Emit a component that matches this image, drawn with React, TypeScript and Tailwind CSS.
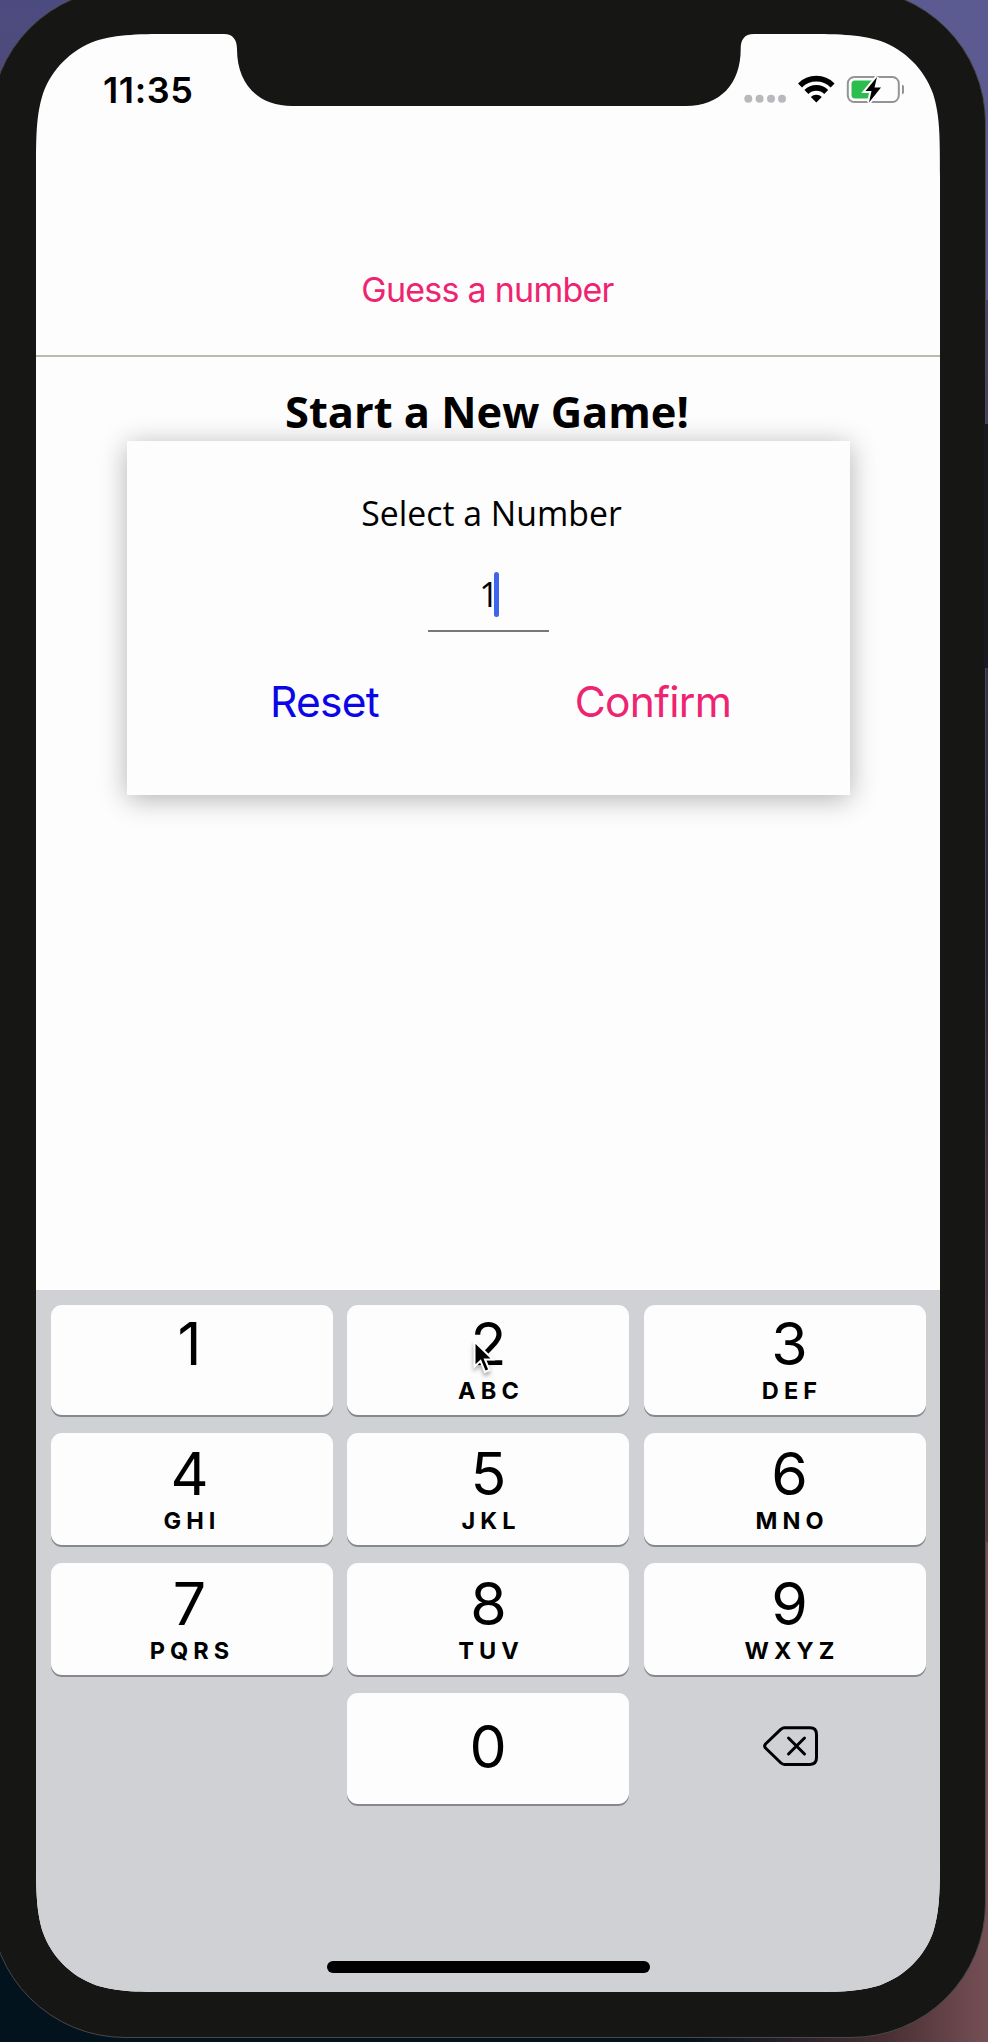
const screenClip =
  "[clip-path:path('M143.7_0_H188_C197_0_201_6_201_15_C201_50_222_72_256_72_H650_C684_72_704.7_50_704.7_15_C704.7_6_708_0_718_0_H760.3_C801.7_0_822.4_0_844.6_7_C869_15.9_888.1_35_897_59.4_C904_81.6_904_102.3_904_143.7_V1814.3_C904_1855.7_904_1876.4_897_1898.6_C888.1_1923_869_1942.1_844.6_1951_C822.4_1958_801.7_1958_760.3_1958_H143.7_C102.3_1958_81.6_1958_59.4_1951_C35_1942.1_15.9_1923_7_1898.6_C0_1876.4_0_1855.7_0_1814.3_V143.7_C0_102.3_0_81.6_7_59.4_C15.9_35_35_15.9_59.4_7_C81.6_0_102.3_0_143.7_0_Z')]";

const keys = [
  ["1", ""],
  ["2", "ABC"],
  ["3", "DEF"],
  ["4", "GHI"],
  ["5", "JKL"],
  ["6", "MNO"],
  ["7", "PQRS"],
  ["8", "TUV"],
  ["9", "WXYZ"],
];

const columnPadding = ["pr-[4px]", "pl-[1px]", "pl-[10px]"];

function StatusBar() {
  return (
    <div className="flex h-[112px] items-start justify-between pl-[67px] pr-[36px] pt-[36px]">
      <div className="text-[36px] font-semibold leading-[40px] tracking-[0.6px]">11:35</div>
      <svg width="164" height="36" viewBox="740 70 164 36">
        <g fill="#b9b9bd">
          <circle cx="748.3" cy="98.7" r="4" />
          <circle cx="759.6" cy="98.7" r="4" />
          <circle cx="771" cy="98.7" r="4" />
          <circle cx="782" cy="98.7" r="4" />
        </g>
        <g fill="none" stroke="#000" strokeWidth="5.6">
          <path d="M800 85.4 A23 23 0 0 1 832.6 85.4" />
          <path d="M806.4 92 A14 14 0 0 1 826.2 92" />
        </g>
        <path d="M816.3 102.4 L810.8 96.9 A7.8 7.8 0 0 1 821.8 96.9 Z" fill="#000" />
        <rect x="847.8" y="77" width="51" height="25" rx="6.5" fill="none" stroke="#949496" strokeWidth="2" />
        <path d="M902 84.500 C906.500 86.5 906.500 92.5 902 94.500 Z" fill="#949496" />
        <rect x="851.5" y="80.500" width="24" height="18" rx="3.5" fill="#2dbd4e" />
        <path
          d="M877 77 L865.500 91 H871.5 L869 102.500 L881 87.500 H874.5 Z"
          fill="#000"
          stroke="#fdfdfd"
          strokeWidth="4"
          paintOrder="stroke"
        />
      </svg>
    </div>
  );
}

function Key({ digit, letters, index }: { digit: string; letters: string; index: number }) {
  return (
    <button
      className={`relative flex flex-col items-center rounded-[11px] bg-[#fdfdfd] shadow-[0_2px_0_#86888b] ${index < 3 ? "pt-[9px]" : "pt-[11px]"} ${columnPadding[index % 3]}`}
    >
      <span className="text-[59px] leading-[60px]">{digit}</span>
      <span className="mt-[5px] pl-[5px] text-[23.500px] font-bold leading-[24px] tracking-[5.1px]">{letters}</span>
      {digit === "2" && (
        <svg
          className="absolute left-[124px] top-[35px] drop-shadow-[0_3px_2px_rgba(0,0,0,0.35)]"
          width="28"
          height="36"
          viewBox="0 0 28 36"
        >
          <path
            d="M3.500 1.500 V26.500 L9.500 21 L14 32 L18.500 30 L14 19.500 H22 Z"
            fill="#000"
            stroke="#fff"
            strokeWidth="2"
          />
        </svg>
      )}
    </button>
  );
}

function Keyboard() {
  return (
    <div className="flex h-[702px] flex-col items-center bg-[#cfd1d5] pt-[15px]">
      <div className="grid w-[875px] grid-cols-3 grid-rows-[110px_112px_112px_111px] gap-x-[14.5px] gap-y-[18px]">
        {keys.map(([digit, letters], i) => (
          <Key key={digit} digit={digit} letters={letters} index={i} />
        ))}
        <div />
        <button className="flex items-center justify-center rounded-[11px] bg-[#fdfdfd] pb-[4px] text-[59px] leading-[60px] shadow-[0_2px_0_#86888b]">
          0
        </button>
        <div className="flex items-start justify-center pl-[12px] pt-[32px]">
          <svg width="56" height="42" viewBox="0 0 56 42" fill="none" stroke="#000" strokeWidth="3" strokeLinejoin="round" strokeLinecap="round">
            <path d="M21.500 2.700 H47 Q53.500 2.700 53.500 9.500 V32.500 Q53.500 39.400 47 39.400 H21.500 Q19.500 39.400 18 38 L2.500 23 Q0.800 21 2.500 19 L18 4.200 Q19.500 2.700 21.500 2.700 Z" />
            <path d="M25.500 13 L41.500 29 M41.500 13 L25.500 29" />
          </svg>
        </div>
      </div>
      <div className="ml-[1px] mt-[157px] h-[12px] w-[323px] rounded-full bg-black" />
    </div>
  );
}

export default function App() {
  return (
    <div className="relative h-[2042px] w-[988px] overflow-hidden bg-[linear-gradient(180deg,#4c4b80_0%,#55466e_10%,#2b2438_45%,#5a3b44_75%,#03131d_92%)] font-['Inter',sans-serif] text-black">
      <div className="h-full w-full bg-[linear-gradient(90deg,transparent_50%,#5b5b92_50%)] bg-[length:100%_300px] bg-no-repeat">
        <div className="flex h-full w-full flex-col bg-[linear-gradient(90deg,transparent_70%,#4a3034_90%,#755055_100%)] bg-[length:100%_500px] bg-bottom bg-no-repeat">
          <div className="-ml-[10px] -mt-[12px] h-[2050px] w-[996px] shrink-0 rounded-[135px] border border-[#4a484c] bg-[#161614] pl-[45px] pt-[45px]">
            <div className={`flex h-[1958px] w-[904px] flex-col bg-[#fdfdfd] ${screenClip}`}>
              <StatusBar />
              <header className="flex h-[211px] items-center justify-center border-b-2 border-[#babaae] pt-[79px]">
                <h1 className="pr-[1px] text-[34px] leading-[40px] tracking-[-0.75px] text-[#ee2470]">Guess a number</h1>
              </header>
              <main className="flex grow flex-col items-center pt-[30px] font-['Open_Sans',sans-serif]">
                <h2 className="pr-[2px] text-[43.400px] font-bold leading-[50px]">Start a New Game!</h2>
                <section className="mt-[4px] flex h-[354px] w-[723px] flex-col items-center bg-[#fdfdfd] pt-[52px] shadow-[0_4px_26px_rgba(0,0,0,0.3)]">
                  <p className="pl-[7px] text-[33.800px] leading-[40px]">Select a Number</p>
                  <div className="mt-[39px] flex h-[60px] w-[121px] items-start justify-center border-b-2 border-[#77777c]">
                    <span className="pl-[2px] pt-[2px] text-[34px] leading-[40px]">1</span>
                    <span className="-ml-[5px] h-[45px] w-[5px] rounded-full bg-[#3f66ea]" />
                  </div>
                  <div className="mt-[50px] flex w-full pb-px font-['Inter',sans-serif] text-[42.500px] leading-[40px] tracking-[-0.7px]">
                    <button className="w-[396px] text-[#0b06e8]">Reset</button>
                    <button className="w-[261px] text-[#ee2470]">Confirm</button>
                  </div>
                </section>
              </main>
              <Keyboard />
            </div>
          </div>
        </div>
      </div>
      <div className="absolute right-0 top-[424px] h-[244px] w-[4px] bg-[#1b1920]" />
    </div>
  );
}
